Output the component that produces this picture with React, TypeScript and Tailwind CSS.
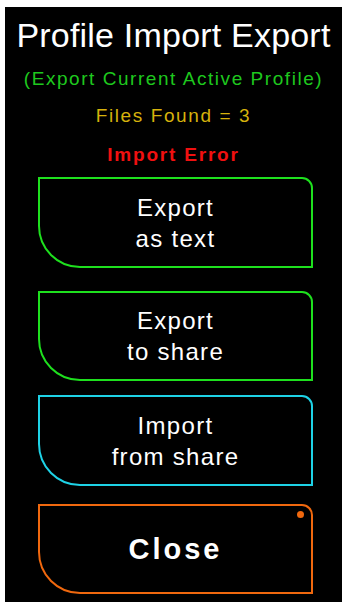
import React from 'react'

type Tone = 'green' | 'cyan' | 'orange'

const borderTone: Record<Tone, string> = {
  green: 'border-[#1ee01e]',
  cyan: 'border-[#1ed2e6]',
  orange: 'border-[#f0680e]',
}

interface MenuButtonProps {
  tone: Tone
  className?: string
  bold?: boolean
  dot?: boolean
  children: React.ReactNode
}

function MenuButton({ tone, className = '', bold = false, dot = false, children }: MenuButtonProps) {
  return <div
    className={`relative ml-[33px] w-[275px] border-2 ${borderTone[tone]} rounded-tr-[11px] rounded-bl-[42px] flex flex-col items-center justify-center text-white ${className}`}
  >
    {dot && <span className="absolute right-[7px] top-[5px] w-[7px] h-[7px] rounded-full bg-[#f0680e]" />}
    <div className={bold ? 'text-[29px] font-bold tracking-[3px] leading-[32px]' : 'text-[24px] tracking-[1.3px] leading-[31px] text-center'}>
      {children}
    </div>
  </div>
}

export default function App() {
  return <div className="w-[342px] h-[602px] bg-white" style={{ fontFamily: '"Liberation Sans", Arial, sans-serif' }}>
    <div className="ml-[5px] mt-[7px] h-[595px] bg-black flex flex-col">
      <p className="pt-[8px] text-center text-white text-[34px] tracking-[0.2px] leading-[40px]">Profile Import Export</p>
      <p className="mt-[12px] text-center text-[#1ec81e] text-[19px] tracking-[1.55px] leading-[24px]">(Export Current Active Profile)</p>
      <p className="mt-[13px] text-center text-[#d6b20c] text-[19px] tracking-[1.6px] leading-[24px]">Files Found = 3</p>
      <p className="mt-[15px] text-center text-[#f01010] text-[19px] font-bold tracking-[1.8px] leading-[24px]">Import Error</p>

      <MenuButton tone="green" className="mt-[10px] h-[91px]">Export<br />as text</MenuButton>
      <MenuButton tone="green" className="mt-[23px] h-[90px]">Export<br />to share</MenuButton>
      <MenuButton tone="cyan" className="mt-[14px] h-[91px]">Import<br />from share</MenuButton>
      <MenuButton tone="orange" bold dot className="mt-[18px] h-[90px]">Close</MenuButton>
    </div>
  </div>
}
